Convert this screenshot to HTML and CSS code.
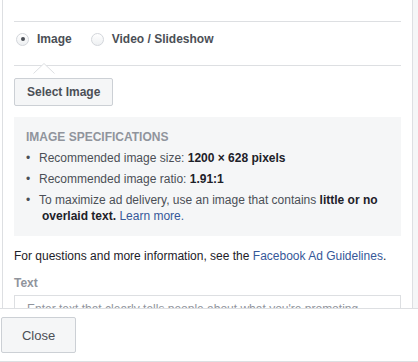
FILE: index.html
```html
<!DOCTYPE html>
<html>
<head>
<meta charset="utf-8">
<link rel="stylesheet" href="styles.css">
</head>
<body>
<div class="page">
  <div class="scroll">
    <div class="panel">
      <div class="radios">
        <label class="option active">
          <span class="radio checked"></span>
          <span class="opt-label">Image</span>
          <svg class="caret" width="22" height="11" viewBox="0 0 22 11"><polyline points="0.5,10.5 11,0.5 21.5,10.5" fill="#fff" stroke="#dddfe2" stroke-width="1"/></svg>
        </label>
        <label class="option">
          <span class="radio"></span>
          <span class="opt-label">Video / Slideshow</span>
        </label>
      </div>
      <button class="btn select-btn">Select Image</button>
      <div class="specs">
        <div class="specs-title">Image Specifications</div>
        <ul class="specs-list">
          <li>Recommended image size: <b>1200 × 628 pixels</b></li>
          <li>Recommended image ratio: <b>1.91:1</b></li>
          <li class="wrap">To maximize ad delivery, use an image that contains <b>little or no overlaid text.</b> <a href="#">Learn more.</a></li>
        </ul>
      </div>
      <p class="info">For questions and more information, see the <a href="#">Facebook Ad Guidelines</a>.</p>
      <div class="field-label">Text</div>
      <div class="textbox">Enter text that clearly tells people about what you're promoting</div>
    </div>
    <div class="gutter"></div>
  </div>
  <div class="footer">
    <button class="btn close-btn">Close</button>
  </div>
</div>
</body>
</html>
```
FILE: styles.css
```css
* { box-sizing: border-box; }
html, body { margin: 0; padding: 0; background: #fff; }
body {
  font-family: "Liberation Sans", Arial, sans-serif;
  font-size: 12px;
  color: #1d2129;
}
.page {
  width: 418px;
  height: 362px;
  display: flex;
  flex-direction: column;
  overflow: hidden;
}
.scroll {
  height: 308px;
  display: flex;
  overflow: hidden;
  padding-left: 2px;
}
.panel {
  width: 411px;
  border-left: 1px solid #dddfe2;
  border-right: 1px solid #dddfe2;
  padding: 21px 11px 0 11px;
  flex: none;
}
.gutter {
  flex: 1;
  background: #f5f6f7;
}
.radios {
  display: flex;
  border-top: 1px solid #dddfe2;
  border-bottom: 1px solid #dddfe2;
  padding: 9px 0 18px 2px;
  line-height: 16px;
}
.option {
  position: relative;
  display: flex;
  align-items: center;
  margin-right: 19px;
  font-weight: bold;
  color: #4b4f56;
}
.radio {
  width: 13px;
  height: 13px;
  border-radius: 50%;
  border: 1px solid #d3d6db;
  background: linear-gradient(#fff, #eef0f2);
  margin-right: 8px;
  display: flex;
  align-items: center;
  justify-content: center;
}
.radio.checked::after {
  content: "";
  width: 4px;
  height: 4px;
  border-radius: 50%;
  background: #4b4f56;
}
.caret {
  position: absolute;
  left: 17px;
  top: 32px;
  display: block;
}
.btn {
  font-family: "Liberation Sans", Arial, sans-serif;
  background: #f5f6f7;
  border: 1px solid #ccd0d5;
  border-radius: 2px;
  color: #4b4f56;
  cursor: pointer;
}
.select-btn {
  display: block;
  margin-top: 12px;
  height: 28px;
  padding: 0 12px;
  font-size: 12px;
  font-weight: bold;
}
.specs {
  margin-top: 11px;
  background: #f5f6f7;
  padding: 12px;
  line-height: 16px;
  color: #4b4f56;
}
.specs-title {
  text-transform: uppercase;
  font-weight: bold;
  color: #90949c;
}
.specs-list {
  list-style: none;
  margin: 0;
  padding: 0;
}
.specs-list li {
  position: relative;
  margin-top: 5px;
  padding-left: 13px;
}
.specs-list li::before {
  content: "•";
  position: absolute;
  left: 0;
  top: 0;
  text-indent: 0;
}
.specs-list li.wrap {
  padding-left: 16px;
  padding-right: 8px;
  text-indent: -3px;
}
.specs-list b { color: #1d2129; }
a { color: #365899; text-decoration: none; }
.info {
  margin: 12px 0 0 0;
  line-height: 16px;
}
.field-label {
  margin-top: 11px;
  line-height: 16px;
  font-weight: bold;
  color: #90949c;
}
.textbox {
  margin-top: 4px;
  border: 1px solid #dddfe2;
  padding: 5px 12px;
  line-height: 16px;
  color: #90949c;
  white-space: nowrap;
  overflow: hidden;
  height: 40px;
}
.footer {
  height: 54px;
  border-top: 1px solid #dddfe2;
  border-bottom: 1px solid #dddfe2;
  padding: 8px 0 8px 1px;
  background: #fff;
}
.close-btn {
  display: block;
  width: 75px;
  height: 36px;
  font-size: 13px;
}
```
